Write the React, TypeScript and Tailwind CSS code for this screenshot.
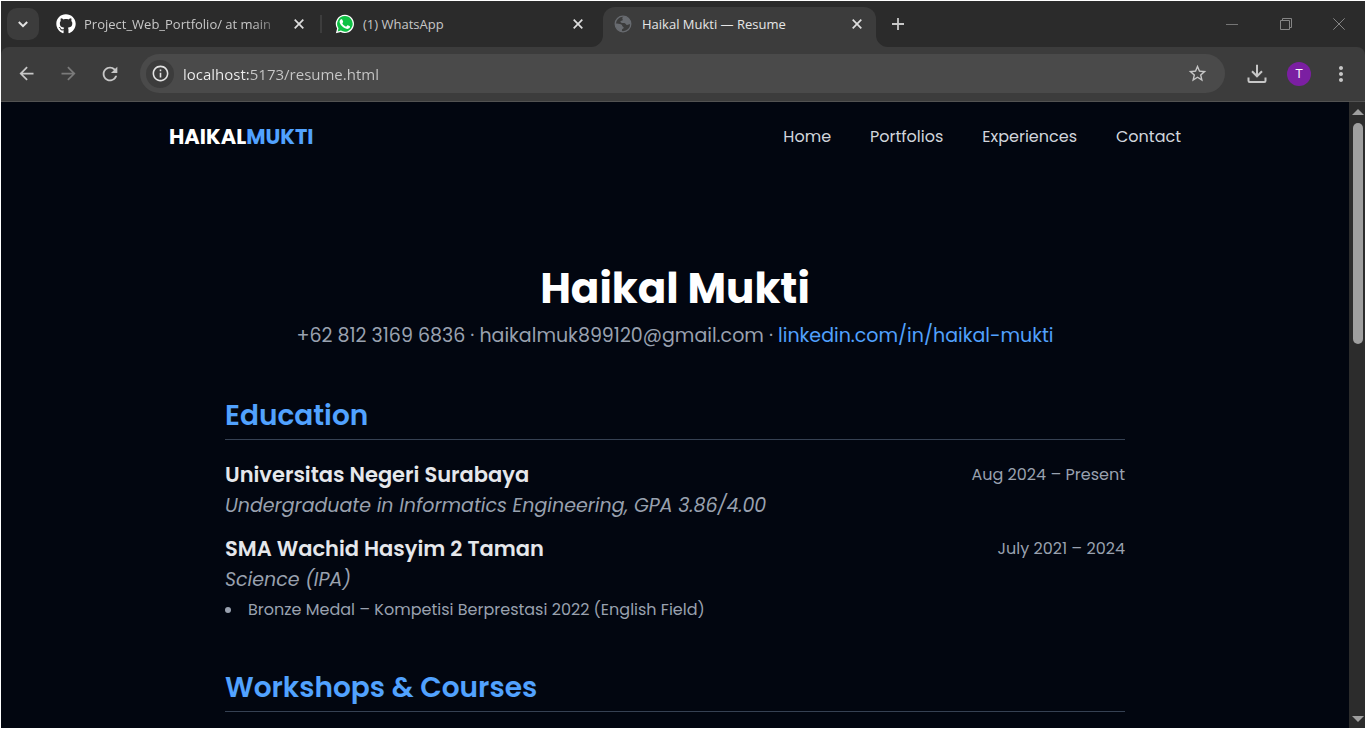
import type { ReactNode } from "react";
import { FaGithub } from "react-icons/fa";
import {
  MdArrowBack,
  MdArrowForward,
  MdMoreVert,
  MdOutlineInfo,
  MdRefresh,
  MdStarBorder,
} from "react-icons/md";

function WhatsAppIcon() {
  return (
    <svg viewBox="0 0 20 20" className="size-5 shrink-0" aria-hidden="true">
      <path
        d="M10 .8a9.1 9.1 0 0 0-7.9 13.7L.9 19.2l4.8-1.2A9.1 9.1 0 1 0 10 .8z"
        fill="#fff"
      />
      <path
        d="M10 2.1a7.8 7.8 0 0 0-6.5 12.2l-.8 3.1 3.2-.8A7.8 7.8 0 1 0 10 2.1z"
        fill="#0fc144"
      />
      <path
        d="M7.3 5.7c-.2-.4-.4-.4-.6-.4h-.5c-.2 0-.5.1-.7.4-.3.3-.9.9-.9 2.1s.9 2.5 1 2.6c.1.2 1.8 2.8 4.4 3.8 2.2.9 2.6.7 3.1.6.5 0 1.5-.6 1.7-1.2.2-.6.2-1.1.2-1.2-.1-.1-.3-.2-.5-.3l-1.7-.8c-.3-.1-.4-.1-.6.1l-.8 1c-.2.2-.3.2-.5.1-.3-.1-1.1-.4-2.1-1.3-.8-.7-1.3-1.5-1.4-1.8-.2-.2 0-.4.1-.5l.4-.5.2-.4c.1-.2 0-.3 0-.5z"
        fill="#fff"
      />
    </svg>
  );
}

function GlobeIcon() {
  return (
    <svg viewBox="0 0 18 18" className="size-[18px] shrink-0" aria-hidden="true">
      <circle cx="9" cy="9" r="7.8" fill="#3c3c3c" stroke="#686b70" strokeWidth="1.3" />
      <path
        d="M9.5 1.5C8.2 2.3 8 3.3 8.6 4.2c.6.8-.3 1.5-1.2 1.5-1 0-1.1.9-.7 1.6.5.9 2.3.5 3.7.8 1.5.3 1.3 1.9 2.7 1.9 1.4 0 2.3-.9 3.5-.6C17 5 14 1.6 9.5 1.5z"
        fill="#686b70"
      />
      <path
        d="M1.3 8.6c2 .1 4.5.2 6 .8 1.3.6.6 1.8 1.7 2.4 1.2.6.8 1.7-.3 2-1 .3-.8 1.7-.6 3C4.2 16.4 1.2 13 1.3 8.6z"
        fill="#686b70"
      />
    </svg>
  );
}

function DownloadIcon() {
  return (
    <svg viewBox="0 0 20 20" className="size-5" fill="none" stroke="currentColor" strokeWidth="2" aria-hidden="true">
      <path d="M10 .8v11M5 7.3l5 5 5-5M1.5 13.5v3.3c0 .7.5 1.2 1.2 1.2h14.6c.7 0 1.2-.5 1.2-1.2v-3.3" />
    </svg>
  );
}

function CrossIcon() {
  return (
    <svg viewBox="0 0 10 10" className="size-2.5" stroke="currentColor" strokeWidth="1.7" aria-hidden="true">
      <path d="M.7.7l8.6 8.6M9.3.7L.7 9.3" />
    </svg>
  );
}

function TabFoot({ side }: { side: "left" | "right" }) {
  return (
    <svg
      viewBox="0 0 12 12"
      className={
        side === "left"
          ? "absolute bottom-0 right-full size-3"
          : "absolute bottom-0 left-full size-3"
      }
      aria-hidden="true"
    >
      <path d={side === "left" ? "M12 0v12H0A12 12 0 0 0 12 0z" : "M0 0v12h12A12 12 0 0 1 0 0z"} fill="#3c3c3c" />
    </svg>
  );
}

function Tab({
  icon,
  title,
  active = false,
  divided = false,
}: {
  icon: ReactNode;
  title: string;
  active?: boolean;
  divided?: boolean;
}) {
  return (
    <div className="flex w-[279px] min-w-0 items-center pr-1.5 pt-1.5">
      <div
        className={
          active
            ? "relative flex h-full w-full items-center rounded-t-xl bg-[#3c3c3c] pb-1.5 pl-[11px] pr-[7px] text-[#e6e6e6]"
            : "relative flex h-full w-full items-center pb-1.5 pl-[11px] pr-[7px] text-[#c7c7c7]"
        }
      >
        {active && <TabFoot side="left" />}
        {active && <TabFoot side="right" />}
        <span className="flex w-7 shrink-0">{icon}</span>
        <span
          className={
            divided
              ? "flex-1 overflow-hidden whitespace-nowrap pt-0.5 text-[13px] [mask-image:linear-gradient(to_right,#000_85%,transparent)]"
              : "flex-1 overflow-hidden whitespace-nowrap pt-0.5 text-[13px]"
          }
        >
          {title}
        </span>
        <button aria-label={`Close ${title}`} className="ml-1 flex size-6 items-center justify-center text-[#dedede]">
          <CrossIcon />
        </button>
        {divided && <span className="absolute -right-1 top-2 h-[18px] w-0.5 bg-[#3d3d3d]" />}
      </div>
    </div>
  );
}

function TabStrip() {
  return (
    <div className="flex h-[46px] shrink-0 bg-[#2b2b2b]">
      <button
        aria-label="Search tabs"
        className="ml-1.5 mr-1.5 mt-[7px] flex size-8 items-center justify-center rounded-[10px] bg-[#3c3c3c] text-[#e3e3e3]"
      >
        <svg viewBox="0 0 10 7" className="h-[7px] w-2.5" fill="none" stroke="currentColor" strokeWidth="2" aria-hidden="true">
          <path d="M.8 1l4.2 4.2L9.2 1" />
        </svg>
      </button>
      <Tab icon={<FaGithub className="size-5 text-white" />} title="Project_Web_Portfolio/ at main" divided />
      <Tab icon={<WhatsAppIcon />} title="(1) WhatsApp" />
      <Tab icon={<GlobeIcon />} title="Haikal Mukti — Resume" active />
      <button aria-label="New tab" className="flex w-8 items-center justify-center text-[#c7c7c7]">
        <svg viewBox="0 0 12 12" className="size-3" stroke="currentColor" strokeWidth="1.8" aria-hidden="true">
          <path d="M6 0v12M0 6h12" />
        </svg>
      </button>
      <div className="ml-auto flex text-[#858585]">
        <button aria-label="Minimize" className="flex w-[54px] items-center justify-center">
          <span className="h-px w-3 bg-[#757575]" />
        </button>
        <button aria-label="Restore" className="flex w-[54px] items-center justify-center">
          <svg viewBox="0 0 12 12" className="size-3" fill="none" stroke="currentColor" aria-hidden="true">
            <path d="M.5 2.5h9v9h-9zM2.5 2.5v-2h9v9h-2" />
          </svg>
        </button>
        <button aria-label="Close window" className="flex w-[52px] items-center justify-center">
          <svg viewBox="0 0 12 12" className="size-3" stroke="currentColor" aria-hidden="true">
            <path d="M.3.3l11.4 11.4M11.7.3L.3 11.7" />
          </svg>
        </button>
      </div>
    </div>
  );
}

function Toolbar() {
  return (
    <div className="shrink-0 bg-[#2b2b2b]">
      <div className="flex h-[55px] items-center rounded-t-lg border-b border-[#525252] bg-[#3c3c3c] pb-px text-[#c7c7c7]">
        <div className="flex w-[139px] shrink-0 items-center pl-1">
          <button aria-label="Back" className="flex w-[42px] justify-center">
            <MdArrowBack className="size-[21px]" />
          </button>
          <button aria-label="Forward" className="flex w-[42px] justify-center text-[#7a7a7a]">
            <MdArrowForward className="size-[21px]" />
          </button>
          <button aria-label="Reload" className="flex w-[42px] justify-center">
            <MdRefresh className="size-[22px]" />
          </button>
        </div>
        <div className="flex h-[39px] flex-1 items-center rounded-full bg-[#4a4a4a] pl-1.5 pr-[17px]">
          <button aria-label="Site information" className="flex size-7 items-center justify-center rounded-full bg-[#3c3c3c] text-[#e3e3e3]">
            <MdOutlineInfo className="size-[19px]" />
          </button>
          <input
            aria-label="Address"
            className="ml-[9px] min-w-0 flex-1 bg-[linear-gradient(to_right,#efefef_67px,#c9c9c9_67px)] bg-clip-text pt-0.5 text-[15px] text-transparent outline-none"
            defaultValue="localhost:5173/resume.html"
            spellCheck={false}
          />
          <button aria-label="Bookmark this page">
            <MdStarBorder className="size-[21px]" />
          </button>
        </div>
        <div className="flex w-[140px] shrink-0 items-center pl-[22px]">
          <button aria-label="Downloads">
            <DownloadIcon />
          </button>
          <button aria-label="Profile" className="ml-5 flex size-6 items-center justify-center rounded-full bg-[#7b1fa2] text-[13px] font-medium text-white">
            T
          </button>
          <button aria-label="Menu" className="ml-[18px]">
            <MdMoreVert className="size-6" />
          </button>
        </div>
      </div>
    </div>
  );
}

function SectionTitle({ children }: { children: ReactNode }) {
  return (
    <h2 className="border-b border-gray-700 pb-[3px] text-[28px] font-semibold leading-10 text-blue-400">
      {children}
    </h2>
  );
}

function Entry({
  school,
  period,
  detail,
  notes = [],
}: {
  school: string;
  period: string;
  detail: string;
  notes?: string[];
}) {
  return (
    <article>
      <div className="flex items-center justify-between leading-[30px]">
        <h3 className="text-[21px] font-semibold text-gray-200">{school}</h3>
        <span className="text-base leading-[30px] text-gray-400">{period}</span>
      </div>
      <p className="text-[19px] italic leading-[31px] text-gray-400">{detail}</p>
      {notes.length > 0 && (
        <ul className="text-base leading-[30px] text-gray-400">
          {notes.map((note) => (
            <li key={note} className="flex items-center gap-[17px]">
              <span className="size-1.5 rounded-full bg-gray-400" />
              {note}
            </li>
          ))}
        </ul>
      )}
    </article>
  );
}

function ResumePage() {
  return (
    <div className="min-w-0 flex-1 overflow-hidden bg-[#020610] font-[Poppins,Inter,sans-serif]">
      <header className="mx-auto flex h-[70px] max-w-[1012px] items-center justify-between">
        <a href="#home" className="text-[21px] font-bold text-white">
          HAIKAL<span className="text-blue-400">MUKTI</span>
        </a>
        <nav className="flex gap-[39px] text-base text-gray-300">
          <a href="#home">Home</a>
          <a href="#portfolios">Portfolios</a>
          <a href="#experiences">Experiences</a>
          <a href="#contact">Contact</a>
        </nav>
      </header>
      <main className="mx-auto max-w-[900px] pt-[93px]">
        <div className="text-center">
          <h1 className="text-[42px] font-bold leading-[48px] text-white">Haikal Mukti</h1>
          <p className="mt-2 text-[19px] leading-[30px] text-gray-400">
            +62 812 3169 6836 · haikalmuk899120@gmail.com ·{" "}
            <a href="#linkedin" className="text-blue-400">
              linkedin.com/in/haikal-mukti
            </a>
          </p>
        </div>
        <section className="mt-[45px]">
          <SectionTitle>Education</SectionTitle>
          <div className="mt-5 flex flex-col gap-[13px]">
            <Entry
              school="Universitas Negeri Surabaya"
              period="Aug 2024 – Present"
              detail="Undergraduate in Informatics Engineering, GPA 3.86/4.00"
            />
            <Entry
              school="SMA Wachid Hasyim 2 Taman"
              period="July 2021 – 2024"
              detail="Science (IPA)"
              notes={["Bronze Medal – Kompetisi Berprestasi 2022 (English Field)"]}
            />
          </div>
        </section>
        <section className="mt-[43px]">
          <SectionTitle>Workshops &amp; Courses</SectionTitle>
        </section>
      </main>
    </div>
  );
}

function Scrollbar() {
  return (
    <div className="flex w-4 shrink-0 flex-col items-center bg-[#2c2c2c] pb-1.5 pl-0.5 pt-[7px]" aria-hidden="true">
      <svg viewBox="0 0 12 6" className="h-1.5 w-3">
        <path d="M0 6L6 0l6 6z" fill="#9f9f9f" />
      </svg>
      <div className="mt-2 h-[221px] w-2.5 rounded-full bg-[#9f9f9f]" />
      <svg viewBox="0 0 12 6" className="mt-auto h-1.5 w-3">
        <path d="M0 0l6 6 6-6z" fill="#9f9f9f" />
      </svg>
    </div>
  );
}

export default function App() {
  return (
    <div className="h-screen bg-white p-px">
      <div className="flex h-full flex-col overflow-hidden font-['Open_Sans','Noto_Sans',sans-serif]">
        <TabStrip />
        <Toolbar />
        <div className="flex min-h-0 flex-1">
          <ResumePage />
          <Scrollbar />
        </div>
      </div>
    </div>
  );
}
